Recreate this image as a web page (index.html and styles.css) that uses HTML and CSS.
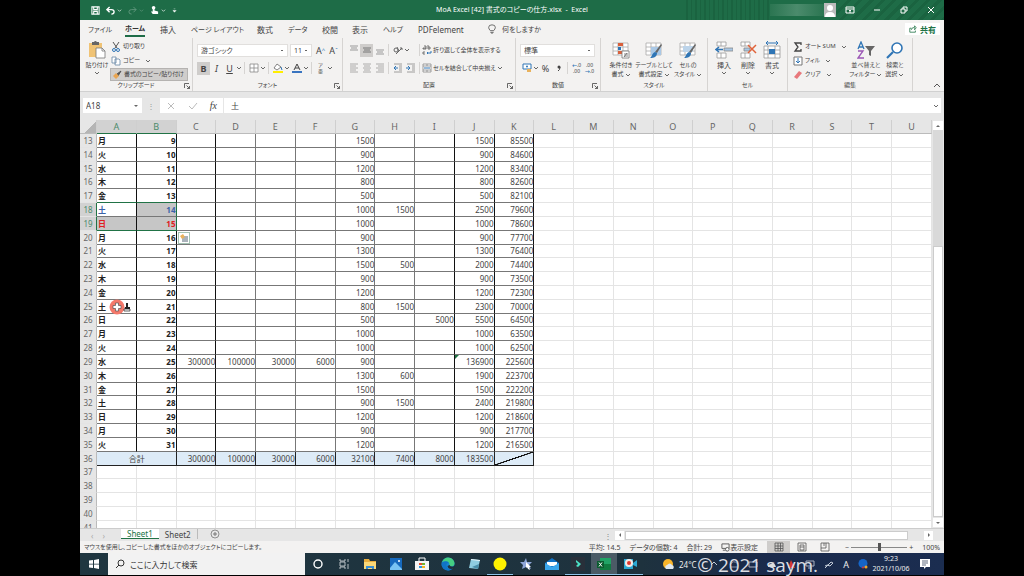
FILE: index.html
```
<!DOCTYPE html>
<html lang="ja">
<head>
    <meta charset="UTF-8">
    <meta name="viewport" content="width=device-width, initial-scale=1.0">
    <title>MoA Excel [42] 書式のコピーの仕方.xlsx - Excel</title>
    <link rel="stylesheet" href="styles.css">
</head>
<body>
    <svg class="defs" aria-hidden="true">
        <symbol id="chev" viewBox="0 0 6 6"><path d="M1 2l2 2 2-2" fill="none" stroke="currentColor" stroke-width=".8"/></symbol>
        <symbol id="launch" viewBox="0 0 6 6"><path d="M.5 5V.5H5M2.500 2.500l3 3M5.500 3v2.500H3" fill="none" stroke="currentColor" stroke-width=".8"/></symbol>
        <symbol id="grid" viewBox="0 0 18 18"><path d="M1 2h15v12H1zM1 6h15M1 10h15M6 2v12M11 2v12" fill="#fff" stroke="#aaa" stroke-width=".8"/></symbol>
        <symbol id="brush" viewBox="0 0 18 18"><path d="M17 4l-5 8-2-1 6-8z" fill="#666"/><path d="M12 12c0 4-3 5-7 5 2-1 2-5 5-6z" fill="#2f75b5"/></symbol>
    </svg>

    <!-- タイトルバー -->
    <header class="titlebar">
        <div class="quick">
            <button aria-label="上書き保存"><svg viewBox="0 0 10 10"><path d="M1 1h8v8H1zM3 1v3h4V1M3 9V6h4v3" fill="none" stroke="#fff" stroke-width="1.200"/></svg></button>
            <button aria-label="元に戻す"><svg viewBox="0 0 10 10"><path d="M4 1L1 4l3 3M1 4h5q3 0 3 2.500T6 9" fill="none" stroke="#fff" stroke-width="1.500"/></svg><svg class="chev"><use href="#chev"/></svg></button>
            <button class="faded" aria-label="やり直し"><svg viewBox="0 0 10 10"><path d="M6 1l3 3-3 3M9 4H4Q1 4 1 6.500T4 9" fill="none" stroke="#fff"/></svg><svg class="chev"><use href="#chev"/></svg></button>
            <button aria-label="タッチ/マウス"><svg viewBox="0 0 10 10"><circle cx="4" cy="2" r="2" fill="#fff"/><path d="M3 1h2v4l4 1v3H3L1 6h2z" fill="#fff"/></svg><svg class="chev"><use href="#chev"/></svg></button>
            <button aria-label="カスタマイズ"><svg class="chev" viewBox="0 0 6 6"><path d="M2 1h2M1 3h4L3 5z" fill="#fff" stroke="#fff" stroke-width=".5"/></svg></button>
        </div>
        <span class="doc">MoA Excel [42] 書式のコピーの仕方.xlsx &nbsp;-&nbsp; Excel</span>
        <div class="deco"></div>
        <div class="account"></div>
        <svg class="avatar" viewBox="0 0 12 14"><path d="M0 0h12v14H0z" fill="#bbb"/><circle cx="6" cy="5" r="3" fill="#fff"/><path d="M1 14q0-5 5-5t5 5z" fill="#fff"/></svg>
        <div class="winbtns">
            <button aria-label="リボンの表示オプション"><svg viewBox="0 0 10 10"><path d="M1 2h8v6H1zM1 4h8M5 8V5M4 6l1-1 1 1" fill="none" stroke="#fff"/></svg></button>
            <button aria-label="最小化"><svg viewBox="0 0 10 10"><path d="M2 5h6" stroke="#fff"/></svg></button>
            <button aria-label="元のサイズ"><svg viewBox="0 0 10 10"><path d="M2 4h4v4H2zM4 4V2h4v4H6" fill="none" stroke="#fff"/></svg></button>
            <button aria-label="閉じる"><svg viewBox="0 0 10 10"><path d="M2 2l6 6M8 2L2 8" stroke="#fff"/></svg></button>
        </div>
    </header>

    <!-- リボンのタブ -->
    <nav class="tabs">
        <button class="kana">ファイル</button>
        <button class="kana active">ホーム</button>
        <button>挿入</button>
        <button class="kana">ページ レイアウト</button>
        <button>数式</button>
        <button class="kana">データ</button>
        <button>校閲</button>
        <button>表示</button>
        <button class="kana">ヘルプ</button>
        <button>PDFelement</button>
        <svg viewBox="0 0 10 12"><path d="M3 8Q1 6 1 4a4 3 0 0 1 8 0q0 2-2 4zM3 10h4M4 11h2" fill="none" stroke="#555"/></svg>
        <button class="kana">何をしますか</button>
        <button class="share"><svg viewBox="0 0 10 10"><path d="M3 4H1v5h7V7M3 6q0-3 4-3V1l2 2.500L7 6V4" fill="none" stroke="#217346"/></svg>共有</button>
    </nav>

    <!-- リボン -->
    <section class="ribbon">
        <div class="group">
            <div class="tools">
                <button class="big paste">
                    <svg viewBox="0 0 18 18"><path d="M1 2h13v14H1z" fill="#f0c375"/><path d="M4 1h2q1-2 3 0h2v3H4z" fill="#666"/><path d="M8 7h6l3 3v7H8z" fill="#fff" stroke="#777" stroke-width=".8"/><path d="M14 7v3h3" fill="none" stroke="#777" stroke-width=".8"/></svg>
                    貼り付け<svg class="chev"><use href="#chev"/></svg>
                </button>
                <div class="list">
                    <button><svg viewBox="0 0 10 10"><path d="M2 0l4 6M8 0L4 6" stroke="#555" fill="none"/><circle cx="3" cy="8" r="1.500" fill="none" stroke="#2f75b5"/><circle cx="7" cy="8" r="1.500" fill="none" stroke="#2f75b5"/></svg>切り取り</button>
                    <button><svg viewBox="0 0 10 10"><path d="M1 1h4v6H1zM4 3h4l1 1v5H4z" fill="#fff" stroke="#6485a4" stroke-width=".8"/></svg>コピー<svg class="chev"><use href="#chev"/></svg></button>
                    <button class="on"><svg viewBox="0 0 10 10"><path d="M9 1L5 4l1 2z" stroke="#555" fill="#555"/><path d="M4 3l3 3-3 3-3-3z" fill="#e9a552"/></svg>書式のコピー/貼り付け</button>
                </div>
            </div>
            <div class="caption">クリップボード<svg><use href="#launch"/></svg></div>
        </div>

        <div class="group">
            <div class="tools rows">
                <div class="row">
                    <select class="font-name" aria-label="フォント"><option>游ゴシック</option></select>
                    <select class="font-size" aria-label="フォント サイズ"><option>11</option></select>
                    <button class="letter" aria-label="拡大">A<sup>^</sup></button>
                    <button class="letter" aria-label="縮小">A<sup>ˇ</sup></button>
                </div>
                <div class="row">
                    <button class="letter on"><b>B</b></button>
                    <button class="letter"><i>I</i></button>
                    <button class="letter"><u>U</u></button>
                    <svg class="chev"><use href="#chev"/></svg>
                    <i class="sep"></i>
                    <button aria-label="罫線"><svg viewBox="0 0 10 10"><path d="M1 1h8v8H1zM5 1v8M1 5h8" fill="#fff" stroke="#888" stroke-width=".8"/></svg></button>
                    <svg class="chev"><use href="#chev"/></svg>
                    <i class="sep"></i>
                    <button aria-label="塗りつぶし"><svg viewBox="0 0 10 10"><path d="M4 1l4 3-4 3-3-2z" fill="#fff" stroke="#666" stroke-width=".8"/><path d="M8 4l1 3" stroke="#2f75b5"/><path d="M0 8h10v2H0z" fill="#ffee00"/></svg></button>
                    <svg class="chev"><use href="#chev"/></svg>
                    <button aria-label="フォントの色"><svg viewBox="0 0 10 10"><path d="M2 7l3-6 3 6M3 5h4" fill="none" stroke="#444"/><path d="M0 8h10v2H0z" fill="#3974c0"/></svg></button>
                    <svg class="chev"><use href="#chev"/></svg>
                    <i class="sep"></i>
                    <button class="ruby" aria-label="ふりがな"><span>ア</span><span>亜</span></button>
                    <svg class="chev"><use href="#chev"/></svg>
                </div>
            </div>
            <div class="caption">フォント<svg><use href="#launch"/></svg></div>
        </div>

        <div class="group">
            <div class="tools rows">
                <div class="row">
                    <button aria-label="上揃え"><svg viewBox="0 0 10 10"><path d="M1 1h8M2 3h6M1 5h8" stroke="#999"/></svg></button>
                    <button class="on" aria-label="上下中央揃え"><svg viewBox="0 0 10 10"><path d="M1 3h8M2 5h6M1 7h8" stroke="#777"/></svg></button>
                    <button aria-label="下揃え"><svg viewBox="0 0 10 10"><path d="M1 5h8M2 7h6M1 9h8" stroke="#999"/></svg></button>
                    <i class="sep"></i>
                    <button aria-label="方向"><svg viewBox="0 0 10 10"><circle cx="3" cy="5" r="2" fill="none" stroke="#666"/><path d="M4 2l2 4M3 9l6-6M7 3h2v2" fill="none" stroke="#666"/></svg></button>
                    <svg class="chev"><use href="#chev"/></svg>
                    <i class="sep wide"></i>
                    <button class="text"><svg viewBox="0 0 10 10"><path d="M2 1h2v3H1V3h3M6 0v4h2V2H6M1 7h2M3 9H1V7" fill="none" stroke="#555" stroke-width=".8"/><path d="M9 6v2H5M6 7L5 8l1 1" fill="none" stroke="#2f75b5"/></svg>折り返して全体を表示する</button>
                </div>
                <div class="row">
                    <button aria-label="左揃え"><svg viewBox="0 0 10 10"><path d="M1 1h8M1 3h6M1 5h8M1 7h6M1 9h8" stroke="#999" stroke-width=".8"/></svg></button>
                    <button aria-label="中央揃え"><svg viewBox="0 0 10 10"><path d="M1 1h8M2 3h6M1 5h8M2 7h6M1 9h8" stroke="#999" stroke-width=".8"/></svg></button>
                    <button aria-label="右揃え"><svg viewBox="0 0 10 10"><path d="M1 1h8M3 3h6M1 5h8M3 7h6M1 9h8" stroke="#999" stroke-width=".8"/></svg></button>
                    <i class="sep"></i>
                    <button aria-label="インデント減"><svg viewBox="0 0 10 10"><path d="M1 1h8M6 3h3M6 5h3M6 7h3M1 9h8" stroke="#888" stroke-width=".8"/><path d="M5 5H1M3 3L1 5l2 2" fill="none" stroke="#2f75b5"/></svg></button>
                    <button aria-label="インデント増"><svg viewBox="0 0 10 10"><path d="M1 1h8M6 3h3M6 5h3M6 7h3M1 9h8" stroke="#888" stroke-width=".8"/><path d="M0 5h4M2 3l2 2-2 2" fill="none" stroke="#2f75b5"/></svg></button>
                    <i class="sep"></i>
                    <button class="text"><svg viewBox="0 0 10 10"><path d="M1 1h8v8H1zM1 3h8M1 7h8M5 1v2M5 7v2" fill="#fff" stroke="#888" stroke-width=".8"/><path d="M2 5h6" stroke="#2f75b5"/></svg>セルを結合して中央揃え<svg class="chev"><use href="#chev"/></svg></button>
                </div>
            </div>
            <div class="caption">配置<svg><use href="#launch"/></svg></div>
        </div>

        <div class="group">
            <div class="tools rows">
                <div class="row">
                    <select class="number-format" aria-label="表示形式"><option>標準</option></select>
                </div>
                <div class="row">
                    <button aria-label="通貨"><svg viewBox="0 0 10 10"><path d="M1 1h8v5H1z" fill="#fff" stroke="#2f75b5"/><circle cx="5" cy="3.500" r="1" fill="#2f75b5"/><path d="M5 6h4v3H5z" fill="#e9b25c"/></svg></button>
                    <svg class="chev"><use href="#chev"/></svg>
                    <button class="letter">%</button>
                    <button class="letter" aria-label="桁区切り"><svg viewBox="0 0 10 10"><circle cx="5" cy="4" r="1.500" fill="#444"/><path d="M6 4q0 3-2 4" fill="none" stroke="#444"/></svg></button>
                    <i class="sep"></i>
                    <button class="digits"><span><b>←</b>.0</span><span>.00</span></button>
                    <button class="digits"><span>.00</span><span><b>→</b>.0</span></button>
                </div>
            </div>
            <div class="caption">数値<svg><use href="#launch"/></svg></div>
        </div>

        <div class="group">
            <div class="tools bigs">
                <button class="big">
                    <svg viewBox="0 0 18 18"><use href="#grid"/><path d="M6 2h5v3H6zM6 10h7v3H6z" fill="#d9603b"/><path d="M6 6h3v3H6z" fill="#2f75b5"/><path d="M10 10h7v7h-7z" fill="#fff" stroke="#777" stroke-width=".8"/><path d="M12 13h4M12 15h4M15 12l-3 4" stroke="#555" stroke-width=".7"/></svg>
                    <span>条件付き</span><span>書式<svg class="chev"><use href="#chev"/></svg></span>
                </button>
                <button class="big">
                    <svg viewBox="0 0 18 18"><use href="#grid"/><path d="M6 6h10v8H6z" fill="#a9c8e6"/><use href="#brush"/></svg>
                    <span>テーブルとして</span><span>書式設定<svg class="chev"><use href="#chev"/></svg></span>
                </button>
                <button class="big">
                    <svg viewBox="0 0 18 18"><use href="#grid"/><path d="M4 5h10v6H4z" fill="#bcd4ea"/><use href="#brush"/></svg>
                    <span>セルの</span><span>スタイル<svg class="chev"><use href="#chev"/></svg></span>
                </button>
            </div>
            <div class="caption">スタイル</div>
        </div>

        <div class="group">
            <div class="tools bigs cells">
                <button class="big">
                    <svg viewBox="0 0 18 18"><path d="M2 1h9v4H2zM2 12h9v5H2zM6 1v4M6 12v5" fill="#fff" stroke="#999" stroke-width=".8"/><path d="M9 7h9v3H9z" fill="#a9c8e6" stroke="#888" stroke-width=".8"/><path d="M8 8.500H1M4 6L1 8.500 4 11" fill="none" stroke="#2f75b5" stroke-width="1.500"/></svg>
                    <span>挿入</span><svg class="chev"><use href="#chev"/></svg>
                </button>
                <button class="big">
                    <svg viewBox="0 0 18 18"><path d="M2 1h9v4H2zM2 12h9v5H2zM6 1v4M6 12v5" fill="#fff" stroke="#999" stroke-width=".8"/><path d="M5 7h6v3H5z" fill="#a9c8e6" stroke="#888" stroke-width=".8"/><path d="M9 4l8 8M17 4l-8 8" stroke="#e0623a" stroke-width="1.500"/></svg>
                    <span>削除</span><svg class="chev"><use href="#chev"/></svg>
                </button>
                <button class="big">
                    <svg viewBox="0 0 18 18"><path d="M1 5h16v12H1zM1 9h16M1 13h16M5 5v12M12 5v12" fill="#fff" stroke="#999" stroke-width=".8"/><path d="M6 8h6v5H6z" fill="#2f75b5"/><path d="M3 2h12M5 0L3 2l2 2M13 0l2 2-2 2" fill="none" stroke="#2f75b5"/></svg>
                    <span>書式</span><svg class="chev"><use href="#chev"/></svg>
                </button>
            </div>
            <div class="caption">セル</div>
        </div>

        <div class="group">
            <div class="tools edit">
                <div class="list">
                    <button><svg viewBox="0 0 10 10"><path d="M8 3V1H2l3 4-3 4h6V7" fill="none" stroke="#444" stroke-width="1.300"/></svg>オート SUM<svg class="chev"><use href="#chev"/></svg></button>
                    <button><svg viewBox="0 0 10 10"><path d="M1 1h8v8H1z" fill="#fff" stroke="#777"/><path d="M5 2v5M3 5l2 2 2-2" fill="none" stroke="#2f75b5"/></svg>フィル<svg class="chev"><use href="#chev"/></svg></button>
                    <button><svg viewBox="0 0 10 10"><path d="M6 1l3 2-5 6-3-2z" fill="#e8787c"/></svg>クリア<svg class="chev"><use href="#chev"/></svg></button>
                </div>
                <button class="big">
                    <svg viewBox="0 0 18 18"><path d="M1 8l3-7 3 7M2 6h4" fill="none" stroke="#2f75b5" stroke-width="1.300"/><path d="M1 10h5l-5 7h6" fill="none" stroke="#9a55b5" stroke-width="1.300"/><path d="M8 5h10l-4 5v5l-2-1v-4z" fill="#666"/></svg>
                    <span>並べ替えと</span><span>フィルター<svg class="chev"><use href="#chev"/></svg></span>
                </button>
                <button class="big">
                    <svg viewBox="0 0 18 18"><circle cx="11" cy="7" r="5" fill="#fff" stroke="#2f75b5" stroke-width="1.600"/><path d="M7 11l-6 6" stroke="#2f75b5" stroke-width="2.200"/></svg>
                    <span>検索と</span><span>選択<svg class="chev"><use href="#chev"/></svg></span>
                </button>
            </div>
            <div class="caption">編集</div>
        </div>
        <button class="collapse" aria-label="リボンを折りたたむ"><svg viewBox="0 0 8 8"><path d="M1 5l3-3 3 3" fill="none" stroke="#555"/></svg></button>
    </section>

    <!-- 数式バー -->
    <div class="formula">
        <div class="name-box"><input aria-label="名前ボックス" value="A18"><i class="tri"></i></div>
        <span class="dots">⋮</span>
        <div class="fx">
            <svg viewBox="0 0 10 10"><path d="M2 2l6 6M8 2L2 8" stroke="#bbb"/></svg>
            <svg viewBox="0 0 10 10"><path d="M1 5l3 3 5-6" fill="none" stroke="#bbb"/></svg>
            <em>fx</em>
        </div>
        <div class="entry"><input aria-label="数式バー" value="土"><svg class="chev"><use href="#chev"/></svg></div>
    </div>

    <!-- シート -->
    <main class="sheet">
        <div class="viewport">
            <table id="cells">
                <thead></thead>
                <tbody></tbody>
            </table>
        </div>
        <div class="vscroll">
            <button aria-label="上へ"><i class="tri up"></i></button>
            <div class="track"></div>
            <div class="thumb"></div>
            <button aria-label="下へ"><i class="tri"></i></button>
        </div>
    </main>

    <div class="sheet-tabs">
        <span class="arrows"><i>‹</i><i>›</i></span>
        <button class="active">Sheet1</button>
        <button>Sheet2</button>
        <button class="add" aria-label="新しいシート"><svg viewBox="0 0 10 10"><circle cx="5" cy="5" r="4" fill="none" stroke="#777" stroke-width=".8"/><path d="M3 5h4M5 3v4" stroke="#777"/></svg></button>
        <div class="hscroll">
            <span>⋮</span>
            <button aria-label="左へ"><i class="tri left"></i></button>
            <div class="thumb"></div>
            <button aria-label="右へ"><i class="tri right"></i></button>
        </div>
    </div>

    <footer class="status">
        <span class="message">マウスを使用し、コピーした書式をほかのオブジェクトにコピーします。</span>
        <span>平均: 14.5</span>
        <span>データの個数: 4</span>
        <span>合計: 29</span>
        <button class="display"><svg viewBox="0 0 10 10"><path d="M1 1h8v5H1zM2 8h3" fill="none" stroke="#555"/><circle cx="7" cy="7" r="2" fill="#fff" stroke="#555"/></svg>表示設定</button>
        <div class="views">
            <button class="on" aria-label="標準"><svg viewBox="0 0 10 10"><path d="M1 1h8v8H1zM1 4h8M1 6.500h8M4 1v8M6.500 1v8" fill="none" stroke="#555" stroke-width=".8"/></svg></button>
            <button aria-label="ページ レイアウト"><svg viewBox="0 0 10 10"><path d="M1 1h8v8H1zM3 3h4v5H3zM3 5h4" fill="none" stroke="#555" stroke-width=".8"/></svg></button>
            <button aria-label="改ページ プレビュー"><svg viewBox="0 0 10 10"><path d="M1 1h8v8H1zM1 6h5V1M4 1v3" fill="none" stroke="#555" stroke-width=".8"/></svg></button>
        </div>
        <div class="zoom"><span>−</span><input type="range" min="0" max="100" value="50" aria-label="ズーム"><span>+</span></div>
        <span>100%</span>
    </footer>

    <!-- タスクバー -->
    <div class="taskbar">
        <button class="start" aria-label="スタート"><svg viewBox="0 0 10 10"><path d="M0 1.500l4-.5v3.700H0zM5 1l5-1v4.700H5zM0 5.500h4V9l-4-.5zM5 5.500h5V10L5 9z" fill="#fff"/></svg></button>
        <label class="search"><svg viewBox="0 0 10 10"><circle cx="6" cy="4" r="3" fill="none" stroke="#333"/><path d="M4 6L1 9" stroke="#333"/></svg><input placeholder="ここに入力して検索"></label>
        <div class="apps">
            <button aria-label="Cortana"><svg viewBox="0 0 14 14"><circle cx="7" cy="7" r="4" fill="none" stroke="#fff" stroke-width="1.400"/></svg></button>
            <button aria-label="タスクビュー"><svg viewBox="0 0 14 14"><path d="M3 2v2h5V2M3 12v-2h5v2M3 5h5v4H3zM11 2v3M11 7v5" fill="none" stroke="#c5ccd0" stroke-width=".9"/></svg></button>
            <button aria-label="エクスプローラー"><svg viewBox="0 0 14 14"><path d="M1 2h5l1 2h6v8H1z" fill="#e8ad3d"/><path d="M1 5h12v7H1z" fill="#fbd877"/><path d="M3 12V9h8v3H9v-1H5v1z" fill="#3b8ed0"/></svg></button>
            <button aria-label="フォト"><svg viewBox="0 0 14 14"><path d="M1 1h12v12H1z" fill="#1669bd"/><path d="M1 11l5-6 7 7v1H1z" fill="#79c4f4"/><circle cx="10" cy="4" r="1" fill="#fff"/></svg></button>
            <button aria-label="Store"><svg viewBox="0 0 14 14"><path d="M4 4V1h6v3" fill="none" stroke="#fff"/><path d="M0 4h14v9H0z" fill="#f5f5f5"/><path d="M4 6h3v2H4z" fill="#e44d2e"/><path d="M7 6h3v2H7z" fill="#6fb62c"/><path d="M4 9h3v2H4z" fill="#2a96df"/><path d="M7 9h3v2H7z" fill="#f6b51e"/></svg></button>
            <button aria-label="Edge"><svg viewBox="0 0 14 14"><circle cx="7" cy="7" r="6.500" fill="#1686d1"/><path d="M1 5.500C2 2 4.500.5 7 .5c4 0 6.500 3 6.500 6 0 3.500-5 4-5 1.500C9 4.500 4 3.500 1 5.500z" fill="#45ce83"/><path d="M1 5.500Q5 3 8 5.500 5 6 5.500 9q1 4 6 2.500Q9 14 6 13.300 1 12 .6 8z" fill="#1173c6"/><path d="M8.500 8q1 2 3.500 1.500l2-1-1 3q-6 1.500-6.500-2.500z" fill="#20303c"/></svg></button>
            <button aria-label="メモ帳"><svg viewBox="0 0 14 14"><path d="M4 2l9 1-2 9-9-1z" fill="#8fcde0"/><path d="M4 2l9 1v1L4 3z" fill="#e8f4f8"/><path d="M5 10l6 2 1-5z" fill="#4a8ea8"/></svg></button>
            <button class="running" aria-label="録画"><svg viewBox="0 0 14 14"><circle cx="7" cy="7" r="6.500" fill="#fff200"/></svg></button>
            <button aria-label="ツール"><svg viewBox="0 0 14 14"><path d="M7 1l1 4 5 0-3 3 2 4-5-2-4 2 1-4-3-3h4z" fill="#8fa6d8"/><path d="M7 5l5 5-2 0 1 3-2-1-1-2-1 1z" fill="#fff"/></svg></button>
            <button aria-label="メール"><svg viewBox="0 0 14 14"><path d="M0 6l7-5 7 5v7H0z" fill="#1173c6"/><path d="M2 5h10v4H2z" fill="#fff"/><path d="M0 6l7 4 7-4v7H0z" fill="#39a6ec"/></svg></button>
            <button class="running" aria-label="Filmora"><svg viewBox="0 0 14 14"><path d="M0 0h14v14H0z" fill="#28303a"/><path d="M5 3l5 4-3 3-2-1 2-2-2-2z" fill="#4be0c5"/></svg></button>
            <button class="running current" aria-label="Excel"><svg viewBox="0 0 14 14"><path d="M3 1h11v12H3z" fill="#21a366"/><path d="M8 7h6v6H3V7z" fill="#107c41"/><path d="M0 4h7v7H0z" fill="#0b5c30"/><path d="M2 5.500l3 4M5 5.500l-3 4" stroke="#fff"/></svg></button>
            <button class="running" aria-label="レコーダー"><svg viewBox="0 0 14 14"><path d="M1 2h9v10H1zM10 6l4-3v7l-4-2z" fill="#2ba8d3"/><circle cx="6" cy="6" r="4" fill="#f4e9e6"/><circle cx="6" cy="6" r="2" fill="#e2382e"/></svg></button>
        </div>
        <div class="weather"><svg viewBox="0 0 12 12"><circle cx="6" cy="6" r="5" fill="#f9b52a"/><path d="M4 11q-2-3 1-4 3-3 5 0 3 1 1 4z" fill="#dfe8f0"/></svg>24°C</div>
        <div class="tray">
            <svg viewBox="0 0 10 10"><path d="M1 6l3-3 3 3" fill="none" stroke="#c5ccd8"/></svg>
            <svg viewBox="0 0 10 10"><path d="M1 6q3-6 8-1M2 8h6" fill="none" stroke="#8791a6"/></svg>
            <svg viewBox="0 0 10 10"><path d="M1 3h8v5H1z" fill="none" stroke="#aab1c0"/></svg>
            <svg viewBox="0 0 10 10"><path d="M1 8q0-3 3-3 3-3 5 3z" fill="#ddd"/></svg>
            <svg viewBox="0 0 10 10"><path d="M5 1l4 8H2z" fill="#d43a33"/></svg>
            <svg viewBox="0 0 10 10"><path d="M1 2h8v5H1zM3 9h4" fill="none" stroke="#aab1c0"/></svg>
            <svg viewBox="0 0 10 10"><path d="M1 9l6-6 2 1-3 3q-3-2-5 0" fill="none" stroke="#c5ccd8"/></svg>
            <span>A</span>
            <svg viewBox="0 0 10 10"><circle cx="5" cy="4.500" r="4.500" fill="#1565c8"/><circle cx="8" cy="8" r="1.500" fill="#f5a623"/><circle cx="5" cy="8.500" r="1" fill="#d33"/></svg>
        </div>
        <div class="clock"><span>9:23</span><span>2021/10/06</span></div>
        <button class="notice" aria-label="通知"><svg viewBox="0 0 12 12"><path d="M1 1h10v8H7l-2 2V9H1z" fill="#fff"/><path d="M3 3h6M3 5h6M3 7h4" stroke="#1b2c48" stroke-width=".7"/></svg></button>
        <div class="watermark">© 2021 saym.</div>
    </div>
    <script src="script.js"></script>
</body>
</html>
```
FILE: styles.css
```
* {
    box-sizing: border-box;
}

body {
    margin: 0;
    padding: 0 80px 1px;
    height: 100vh;
    display: flex;
    flex-direction: column;
    background: #000;
    color: #444;
    font-family: "Noto Sans", "Noto Sans CJK JP", sans-serif;
    font-size: 7px;
    line-height: 9px;
    font-feature-settings: "palt";
    overflow: hidden;
}

button, input, select {
    margin: 0;
    padding: 0;
    border: 0;
    background: none;
    color: inherit;
    font: inherit;
    font-feature-settings: inherit;
    appearance: none;
    outline: none;
}

button {
    display: flex;
    align-items: center;
    justify-content: center;
    white-space: nowrap;
}

svg {
    width: 10px;
    height: 10px;
    flex: none;
}

.defs {
    position: absolute;
    width: 0;
    height: 0;
}

svg.chev {
    width: 6px;
    height: 6px;
}

.tri {
    border: 2px solid transparent;
    border-top-color: #666;
    border-bottom-width: 0;
}

.tri.up {
    border-width: 0 2px 2px;
    border-bottom-color: #666;
}

.tri.left {
    border-width: 2px 2px 2px 0;
    border-color: transparent #666;
}

.tri.right {
    border-width: 2px 0 2px 2px;
    border-color: transparent #666;
}

.on {
    background: #cfcdcb;
}

/* タイトルバー */
.titlebar {
    flex: none;
    height: 20px;
    display: flex;
    align-items: center;
    position: relative;
    background: #1e6c47;
    color: #fff;
}

.quick {
    display: flex;
    gap: 6px;
    padding-left: 11px;
}

.quick svg {
    width: 9px;
    height: 9px;
}

.quick button {
    gap: 2px;
}

.quick .chev {
    width: 5px;
    height: 5px;
}

.faded {
    opacity: 0.3;
}

.doc {
    position: absolute;
    left: 0;
    right: 0;
    text-align: center;
    line-height: 10px;
    pointer-events: none;
}

.deco {
    width: 84px;
    height: 20px;
    margin-left: auto;
    background: repeating-linear-gradient(90deg, #1a6340 0 2px, #1e6c47 2px 5px, #1a6340 5px 6px, #1e6c47 6px 9px);
}

.account {
    width: 54px;
    height: 12px;
    background: linear-gradient(90deg, #2b7551, #4b8b6c, #2b7551);
}

.avatar {
    width: 12px;
    height: 14px;
}

.winbtns {
    display: flex;
    align-self: stretch;
    background: repeating-linear-gradient(135deg, #1a6340 0 3px, #1e6c47 3px 8px);
}

.winbtns button {
    width: 27px;
}

/* リボンのタブ */
.tabs {
    flex: none;
    height: 18px;
    padding: 0 4px 0 8px;
    display: grid;
    grid-template-columns: 37px 35px 31px 66px 31px 34px 30px 31px 35px 69px 15px 1fr auto;
    align-items: center;
    justify-items: start;
    background: #f3f2f1;
    font-size: 8px;
}

.tabs .kana {
    font-size: 7px;
}

.tabs .active {
    font-weight: bold;
    color: #333;
    height: 16px;
    border-bottom: 2px solid #1e6c47;
}

.tabs .share {
    height: 12px;
    padding: 0 4px;
    gap: 3px;
    background: #fff;
    color: #217346;
    font-weight: bold;
}

.share svg {
    width: 8px;
    height: 8px;
}

/* リボン */
.ribbon {
    flex: none;
    height: 54px;
    display: grid;
    grid-template-columns: 113px 150px 173px 85px 107px 80px 125px 1fr;
    background: #f3f2f1;
    border-bottom: 1px solid #d0d0d0;
    font-size: 6px;
}

.group {
    display: flex;
    flex-direction: column;
    border-right: 1px solid #d6d4d2;
    min-width: 0;
}

.tools {
    flex: 1;
    display: flex;
    align-items: flex-start;
    padding: 2px 4px 0;
}

.caption {
    position: relative;
    height: 10px;
    text-align: center;
}

.caption svg {
    position: absolute;
    right: 2px;
    top: 2px;
    width: 6px;
    height: 6px;
}

.rows {
    flex-direction: column;
    gap: 4px;
    padding-top: 5px;
}

.row {
    display: flex;
    align-items: center;
    height: 14px;
    white-space: nowrap;
}

.row button {
    width: 13px;
    height: 13px;
}

.row .text {
    width: auto;
    gap: 1px;
}

.sep {
    width: 1px;
    height: 12px;
    margin: 0 2px;
    background: #d6d4d2;
}

.sep.wide {
    margin-left: 9px;
}

.big {
    flex-direction: column;
    width: 28px;
}

.big > svg:first-child {
    width: 18px;
    height: 18px;
    margin: 1px 0 2px;
}

.big span {
    display: flex;
    align-items: center;
    gap: 1px;
}

.bigs {
    display: grid;
    grid-template-columns: 32px 34px 34px;
    justify-items: center;
}

.cells {
    grid-template-columns: repeat(3, 24px);
}

.cells, .row select {
    font-size: 7px;
}

.list {
    display: flex;
    flex-direction: column;
    align-items: flex-start;
    gap: 1px;
}

.list button {
    height: 13px;
    padding: 0 3px 0 1px;
    gap: 2px;
}

.list .on {
    border: 1px solid #b5b3b1;
}

.list .chev {
    margin-left: 3px;
}

.edit {
    gap: 1px;
}

.edit .list {
    width: 62px;
}

.edit .big {
    width: 30px;
}

select {
    height: 13px;
    padding: 0 3px;
    background: linear-gradient(#666, #666) no-repeat right 4px center / 2px 1px, #fff;
    border: 1px solid #e1dfdd;
}

.font-name {
    width: 91px;
    margin-right: 2px;
}

.font-size {
    width: 22px;
    margin-right: 2px;
}

.number-format {
    width: 75px;
}

.row .letter {
    font-size: 9px;
}

.letter sup {
    font-size: 6px;
    line-height: 6px;
    color: #2f75b5;
}

.ruby, .digits {
    flex-direction: column;
    font-size: 5px;
    line-height: 6px;
}

.digits b {
    color: #2f75b5;
}

.collapse {
    align-self: end;
    justify-self: end;
    padding: 0 3px 1px 0;
}

.collapse svg {
    width: 8px;
    height: 8px;
}

/* 数式バー */
.formula {
    flex: none;
    height: 28px;
    padding: 6px 3px 7px;
    display: flex;
    background: #e6e6e6;
    font-size: 8px;
}

.name-box {
    width: 59px;
    padding: 0 4px 0 3px;
    display: flex;
    align-items: center;
    background: #fff;
}

.name-box input, .entry input {
    flex: 1;
    min-width: 0;
}

.dots {
    width: 18px;
    text-align: center;
    line-height: 15px;
    color: #999;
}

.fx {
    width: 63px;
    display: flex;
    align-items: center;
    justify-content: space-around;
    margin-right: 1px;
    background: #fff;
}

.fx em {
    font-family: "Liberation Serif", serif;
    font-size: 10px;
}

.entry {
    flex: 1;
    display: flex;
    align-items: center;
    padding: 0 2px 0 7px;
    background: #fff;
}

/* シート */
.sheet {
    flex: 1;
    min-height: 0;
    display: flex;
    background: #e6e6e6;
}

.viewport {
    flex: 1;
    overflow: hidden;
    background: #fff;
}

table {
    width: 100%;
    height: 415px;
    table-layout: fixed;
    border-collapse: separate;
    border-spacing: 0;
    font-size: 8px;
    line-height: 11px;
    font-feature-settings: normal;
}

th, td {
    position: relative;
    padding: 0 0 0 1px;
    border-right: 1px solid #e4e4e4;
    border-bottom: 1px solid #e4e4e4;
    text-align: right;
    white-space: nowrap;
}

th {
    padding: 0;
    background: #e6e6e6;
    color: #666;
    font-weight: normal;
    text-align: center;
}

thead th {
    height: 14px;
    border-right-color: #cfcfcf;
    border-bottom-color: #bbb;
    font-size: 9px;
}

thead th:first-child {
    width: 17px;
    background: linear-gradient(135deg, #e6e6e6 60%, #b5b5b5 60%);
}

th.picked {
    background: #d2d2d2;
    color: #4b8b6c;
}

thead th.picked {
    border-bottom-color: #217346;
}

tbody th {
    border-right-color: #bbb;
}

tbody th.picked {
    border-right-color: #217346;
}

.data td.in {
    border-color: #777;
}

.data td.edge {
    border-right-color: #111;
}

.data .day {
    text-align: left;
    font-weight: bold;
    color: #222;
}

.data .date {
    font-weight: bold;
    color: #222;
}

.data .sel {
    background: #c6c6c6;
}

.data .cursor {
    background: #fff;
}

.data.sat .day, .data.sat .date {
    color: #3b62a8;
}

.data.sun .day, .data.sun .date {
    color: #e02020;
}

.data.before-sel td.day, .data.before-sel td.date,
.data.sun td.day, .data.sun td.date {
    border-bottom-color: #217346;
}

.data.sat td.date, .data.sun td.date {
    border-right-color: #217346;
}

.total td.in {
    background: #ddebf7;
    border-color: #222;
}

.total .merged {
    text-align: center;
}

.total td.slash {
    background: linear-gradient(to bottom right, transparent 47%, #111 48%, #111 52%, transparent 53%), #ddebf7;
}

.warn::before {
    content: "";
    position: absolute;
    left: 0;
    top: 0;
    border: 2px solid #217346;
    border-right-color: transparent;
    border-bottom-color: transparent;
}

.paste-tag {
    position: absolute;
    left: 1px;
    top: 1px;
    width: 12px;
    height: 12px;
    background: #fff;
    border: 1px solid #a5c3b4;
    z-index: 1;
}

.pointer {
    position: absolute;
    left: 12px;
    top: -1px;
    width: 24px;
    height: 16px;
    z-index: 1;
}

.vscroll {
    width: 12px;
    padding: 1px;
    display: flex;
    flex-direction: column;
}

.vscroll button {
    height: 9px;
    background: #fff;
}

.vscroll .track {
    flex: 117;
    background: #d9d9d9;
}

.vscroll .thumb {
    flex: 271;
    margin-bottom: 1px;
    background: #fff;
    border: 1px solid #ccc;
}

/* シート見出し */
.sheet-tabs {
    flex: none;
    height: 13px;
    display: flex;
    align-items: center;
    background: #e6e6e6;
    border-top: 1px solid #ccc;
    font-size: 8px;
}

.arrows {
    width: 41px;
    display: flex;
    gap: 9px;
    padding-left: 11px;
    color: #aaa;
}

.arrows i {
    font-style: normal;
}

.sheet-tabs > button {
    padding: 0 6px;
    height: 10px;
    align-self: flex-start;
}

.sheet-tabs > .active {
    background: #fff;
    color: #217346;
    border-bottom: 1px solid #217346;
}

.sheet-tabs > .add {
    border-left: 1px solid #bbb;
    padding-left: 12px;
}

.hscroll {
    margin-left: auto;
    width: 340px;
    display: flex;
    align-items: center;
    height: 9px;
}

.hscroll span {
    width: 11px;
    color: #888;
}

.hscroll button {
    width: 9px;
    height: 9px;
    background: #fff;
}

.hscroll button:last-child {
    margin-right: 11px;
}

.hscroll .thumb {
    flex: 1;
    height: 9px;
    margin: 0 16px 0 1px;
    background: #fff;
    border: 1px solid #ccc;
}

/* ステータスバー */
.status {
    flex: none;
    height: 12px;
    padding: 0 4px;
    display: flex;
    align-items: center;
    gap: 9px;
    background: #f3f2f1;
    white-space: nowrap;
}

.message {
    margin-right: auto;
    font-size: 6px;
}

.display svg {
    width: 9px;
    height: 9px;
}

.views {
    display: flex;
}

.views button {
    width: 23px;
    height: 12px;
}

.zoom {
    display: flex;
    align-items: center;
    gap: 2px;
}

.zoom input {
    width: 56px;
    height: 10px;
    background: linear-gradient(#888, #888) no-repeat center / 100% 1px;
}

.zoom input::-webkit-slider-thumb {
    appearance: none;
    width: 3px;
    height: 8px;
    background: #555;
}

/* タスクバー */
.taskbar {
    flex: none;
    height: 22px;
    display: flex;
    align-items: center;
    position: relative;
    background: linear-gradient(90deg, #1f3640, #1e323e 65%, #1a2a4c 80%, #1b2d50);
    color: #eee;
}

.start {
    width: 28px;
}

.search {
    width: 197px;
    height: 22px;
    padding-left: 7px;
    display: flex;
    align-items: center;
    gap: 5px;
    background: #f2f2f2;
    color: #333;
    font-size: 8px;
}

.search input {
    flex: 1;
}

.search input::placeholder {
    color: #333;
}

.apps {
    display: flex;
    align-self: stretch;
}

.apps button {
    width: 26px;
    padding: 0 2px;
    border-bottom: 1px solid transparent;
}

.apps svg {
    width: 14px;
    height: 14px;
}

.apps .running {
    border-bottom-color: #8cc4ea;
}

.apps .current {
    background: #4b5b66;
}

.weather {
    display: flex;
    align-items: center;
    gap: 5px;
    margin-left: 19px;
    font-size: 8px;
}

.weather svg {
    width: 12px;
    height: 12px;
}

.tray {
    flex: 1;
    display: flex;
    align-items: center;
    justify-content: flex-end;
    gap: 9px;
    font-size: 9px;
}

.clock {
    width: 46px;
    display: flex;
    flex-direction: column;
    align-items: center;
    line-height: 10px;
}

.notice {
    margin: 0 13px 0 5px;
}

.notice svg {
    width: 12px;
    height: 12px;
}

.watermark {
    position: absolute;
    right: 126px;
    top: 1px;
    color: #dcdfe4;
    font-family: "Open Sans", sans-serif;
    font-size: 19px;
    line-height: 22px;
    white-space: nowrap;
}
```
FILE: script.js
```
const columns = "ABCDEFGHIJKLMNOPQRSTU".split("");
const edges = ["A", "B", "C", "I", "J", "K"];

// A, B, ... K
const rows = {
    13: "月,9,,,,,1500,,,1500,85500",
    14: "火,10,,,,,900,,,900,84600",
    15: "水,11,,,,,1200,,,1200,83400",
    16: "木,12,,,,,800,,,800,82600",
    17: "金,13,,,,,500,,,500,82100",
    18: "土,14,,,,,1000,1500,,2500,79600",
    19: "日,15,,,,,1000,,,1000,78600",
    20: "月,16,,,,,900,,,900,77700",
    21: "火,17,,,,,1300,,,1300,76400",
    22: "水,18,,,,,1500,500,,2000,74400",
    23: "木,19,,,,,900,,,900,73500",
    24: "金,20,,,,,1200,,,1200,72300",
    25: "土,21,,,,,800,1500,,2300,70000",
    26: "日,22,,,,,500,,5000,5500,64500",
    27: "月,23,,,,,1000,,,1000,63500",
    28: "火,24,,,,,1000,,,1000,62500",
    29: "水,25,300000,100000,30000,6000,900,,,136900,225600",
    30: "木,26,,,,,1300,600,,1900,223700",
    31: "金,27,,,,,1500,,,1500,222200",
    32: "土,28,,,,,900,1500,,2400,219800",
    33: "日,29,,,,,1200,,,1200,218600",
    34: "月,30,,,,,900,,,900,217700",
    35: "火,31,,,,,1200,,,1200,216500",
    36: "合計,,300000,100000,30000,6000,32100,7400,8000,183500,"
};

const pasteTag = '<svg class="paste-tag" viewBox="0 0 10 10"><path d="M3 4h6M3 6h6M3 8h6" stroke="#567"/><path d="M1 3l3-2 2 3-3 2z" fill="#e9b25c"/></svg>';
const pointer = '<svg class="pointer" viewBox="0 0 24 16"><circle cx="8" cy="8" r="7.500" fill="#f4796b"/>' +
    '<path d="M6.500 4h3v2.500H12v3H9.500V12h-3V9.500H4v-3h2.500z" fill="#fff" stroke="#555" stroke-width=".7"/>' +
    '<path d="M17 4h2v4h2v4h-6l1-4h1z" fill="#222"/><path d="M15 10h6v2h-6z" fill="#fff" stroke="#222" stroke-width=".7"/></svg>';

document.querySelector("#cells thead").innerHTML = "<tr><th></th>" +
    columns.map(c => `<th class="${c === "A" || c === "B" ? "picked" : ""}">${c}</th>`).join("") + "</tr>";

let html = "";
for (let n = 13; n <= 41; n++) {
    const values = rows[n] ? rows[n].split(",") : [];
    const selected = n === 18 || n === 19;
    const rowClass = [];
    if (rows[n]) rowClass.push("data");
    if (n === 17) rowClass.push("before-sel");
    if (n === 18) rowClass.push("sat");
    if (n === 19) rowClass.push("sun");
    if (n === 36) rowClass.push("total");

    html += `<tr class="${rowClass.join(" ")}"><th class="${selected ? "picked" : ""}">${n}</th>`;
    columns.forEach((c, i) => {
        if (n === 36 && c === "B") return;
        const cls = [];
        if (i < values.length) cls.push("in");
        if (edges.includes(c)) cls.push("edge");
        if (n < 36 && c === "A") cls.push("day");
        if (n < 36 && c === "B") cls.push("date");
        if (selected && i < 2) cls.push("sel");
        if (n === 18 && c === "A") cls.push("cursor");
        if (n === 29 && c === "J") cls.push("warn");
        if (n === 36 && c === "A") cls.push("merged");
        if (n === 36 && c === "K") cls.push("slash");
        let text = values[i] || "";
        if (n === 20 && c === "C") text += pasteTag;
        if (n === 25 && c === "A") text += pointer;
        html += `<td class="${cls.join(" ")}"${n === 36 && c === "A" ? ' colspan="2"' : ""}>${text}</td>`;
    });
    html += "</tr>";
}
document.querySelector("#cells tbody").innerHTML = html;
```
